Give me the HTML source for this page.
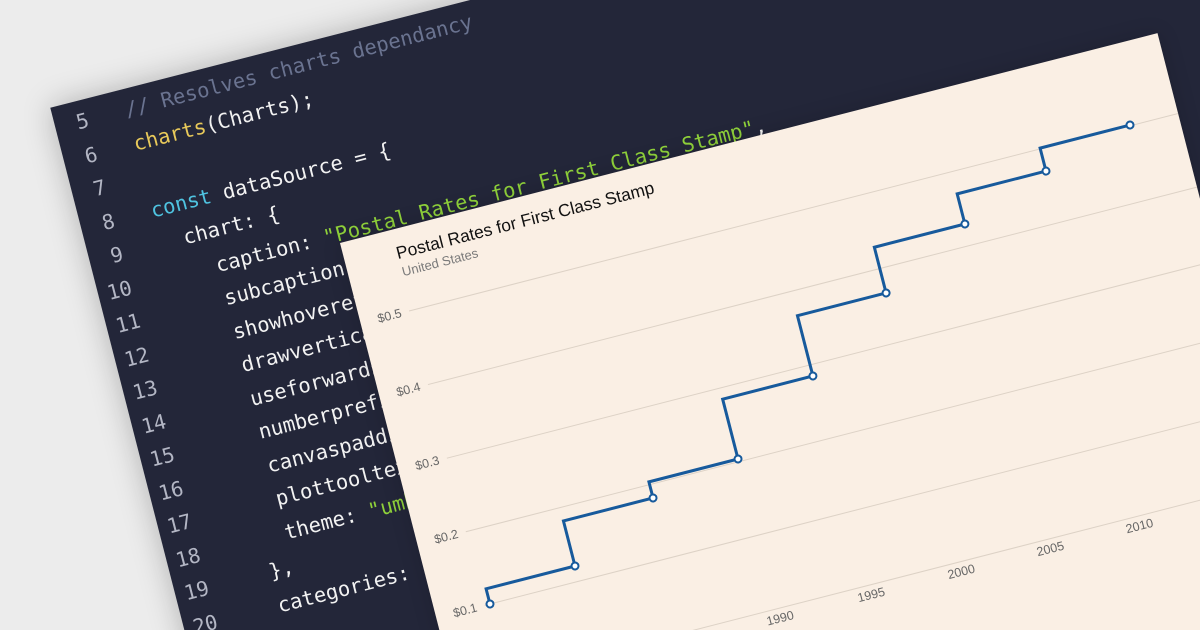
<!DOCTYPE html>
<html><head><meta charset="utf-8"><style>
html,body{margin:0;padding:0;width:1200px;height:630px;overflow:hidden}
body{background:#ececec;position:relative}
.rot{position:absolute;left:340px;top:243px;width:0;height:0;transform-origin:0 0;transform:rotate(-14.4deg)}
.code{position:absolute;left:-247px;top:-203px;width:1200px;height:1000px;background:#232639;box-shadow:0 0 30px rgba(0,0,0,.25);font-family:"DejaVu Sans Mono","Liberation Mono",monospace;font-size:20.5px}
.lines{position:absolute;top:4px;left:0;line-height:34.5px;white-space:pre}
.ln{display:inline-block;width:34px;text-align:right;color:#b3b6c4;margin-right:38px}
.c{color:#6a7390}.y{color:#e8c95a}.k{color:#4fc3e0}.w{color:#f2f2f2}.g{color:#8fd13a}
.chart{position:absolute;left:0;top:0;width:844px;height:700px;background:#faefe4;box-shadow:0 0 20px rgba(0,0,0,.15)}
</style></head><body>
<div class="rot">
<div class="code"><div class="lines"><span class="ln">5</span><span class="c">// Resolves charts dependancy</span>
<span class="ln">6</span><span class="y">charts</span><span class="w">(Charts);</span>
<span class="ln">7</span>
<span class="ln">8</span><span class="k">const</span><span class="w"> dataSource = {</span>
<span class="ln">9</span><span class="w">  chart: {</span>
<span class="ln">10</span><span class="w">    caption: </span><span class="g">"Postal Rates for First Class Stamp"</span><span class="w">,</span>
<span class="ln">11</span><span class="w">    subcaption: </span><span class="g">"United States"</span><span class="w">,</span>
<span class="ln">12</span><span class="w">    showhovereffect: </span><span class="g">"1"</span><span class="w">,</span>
<span class="ln">13</span><span class="w">    drawverticaljoints: </span><span class="g">"1"</span><span class="w">,</span>
<span class="ln">14</span><span class="w">    useforwardsteps: </span><span class="g">"0"</span><span class="w">,</span>
<span class="ln">15</span><span class="w">    numberprefix: </span><span class="g">"$"</span><span class="w">,</span>
<span class="ln">16</span><span class="w">    canvaspadding: </span><span class="g">"10"</span><span class="w">,</span>
<span class="ln">17</span><span class="w">    plottooltext: </span><span class="g">"$label"</span><span class="w">,</span>
<span class="ln">18</span><span class="w">    theme: </span><span class="g">"umber"</span>
<span class="ln">19</span><span class="w">  },</span>
<span class="ln">20</span><span class="w">  categories: [</span>
</div></div>
<div class="chart">
<svg width="844" height="700" xmlns="http://www.w3.org/2000/svg" style="position:absolute;left:0;top:0">
<g font-family="Liberation Sans, DejaVu Sans, sans-serif">
<text x="52" y="30" font-size="17.4" fill="#111">Postal Rates for First Class Stamp</text>
<text x="53" y="48" font-size="13" fill="#7a7a7a">United States</text>
<g stroke="#ddd2c6" stroke-width="1">
<line x1="50" y1="83" x2="844" y2="83"/><line x1="50" y1="159" x2="844" y2="159"/>
<line x1="50" y1="235" x2="844" y2="235"/><line x1="50" y1="311" x2="844" y2="311"/>
<line x1="50" y1="387" x2="844" y2="387"/><line x1="50" y1="463" x2="844" y2="463"/>
</g>
<g font-size="12.5" fill="#666" text-anchor="end">
<text x="42" y="87">$0.5</text><text x="42" y="163">$0.4</text><text x="42" y="239">$0.3</text>
<text x="42" y="315">$0.2</text><text x="42" y="391">$0.1</text>
</g>
<g font-size="12.5" fill="#666" text-anchor="middle">
<text x="333" y="477">1990</text><text x="427" y="477">1995</text><text x="520" y="477">2000</text>
<text x="612" y="477">2005</text><text x="704" y="477">2010</text>
</g>
<path d="M55.5 387 V371.3 H147.3 V324.8 H239.8 V308.2 H331.8 V246.4 H425 V184.2 H516.5 V137 H610 V105.9 H701.7 V82.2 H794.5" fill="none" stroke="#175a9c" stroke-width="3" stroke-linejoin="miter"/>
<g fill="#fff" stroke="#175a9c" stroke-width="2">
<circle cx="55.5" cy="387" r="3.5"/><circle cx="147.3" cy="371.3" r="3.5"/><circle cx="239.8" cy="324.8" r="3.5"/>
<circle cx="331.8" cy="308.2" r="3.5"/><circle cx="425" cy="246.4" r="3.5"/><circle cx="516.5" cy="184.2" r="3.5"/>
<circle cx="610" cy="137" r="3.5"/><circle cx="701.7" cy="105.9" r="3.5"/><circle cx="794.5" cy="82.2" r="3.5"/>
</g>
</g>
</svg>
</div>
</div>
</body></html>
